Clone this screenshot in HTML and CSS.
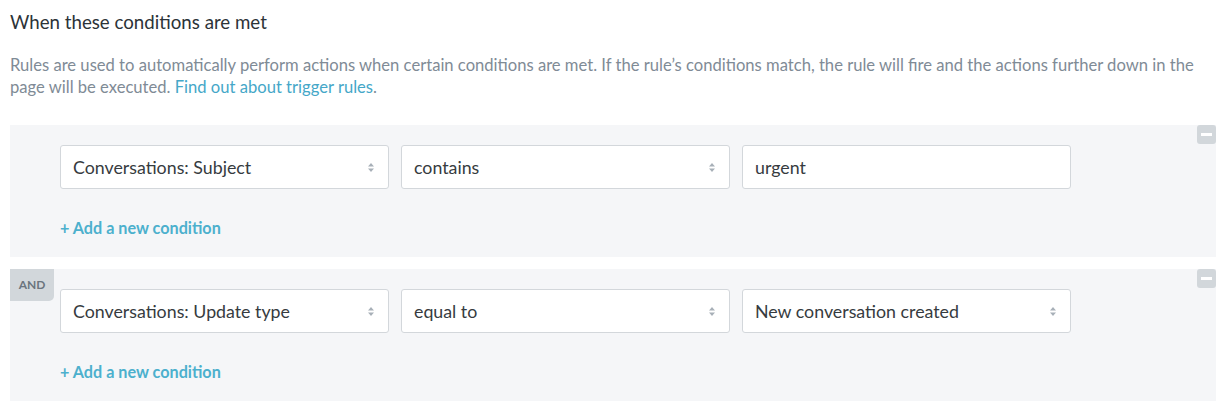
FILE: index.html
```html
<!DOCTYPE html>
<html>
<head>
<meta charset="utf-8">
<link rel="stylesheet" href="styles.css">
</head>
<body>
<div class="page">
  <h2 class="title">When these conditions are met</h2>
  <p class="desc"><span>Rules are used to automatically perform actions when certain conditions are met. If the rule’s conditions match, the rule will fire and the actions further down in the</span> <span>page will be executed.</span> <a class="link" href="#">Find out about trigger rules</a><span>.</span></p>

  <div class="group">
    <button class="remove" aria-label="Remove"><span class="bar"></span></button>
    <div class="row">
      <div class="select"><span>Conversations: Subject</span><svg class="caret" width="6" height="9" viewBox="0 0 6 9"><path d="M3 0L6 3.5H0Z M3 9L6 5.5H0Z" fill="#a8b0b8"/></svg></div>
      <div class="select"><span>contains</span><svg class="caret" width="6" height="9" viewBox="0 0 6 9"><path d="M3 0L6 3.5H0Z M3 9L6 5.5H0Z" fill="#a8b0b8"/></svg></div>
      <div class="input">urgent</div>
    </div>
    <a class="add" href="#">+ Add a new condition</a>
  </div>

  <div class="group">
    <span class="and">AND</span>
    <button class="remove" aria-label="Remove"><span class="bar"></span></button>
    <div class="row">
      <div class="select"><span>Conversations: Update type</span><svg class="caret" width="6" height="9" viewBox="0 0 6 9"><path d="M3 0L6 3.5H0Z M3 9L6 5.5H0Z" fill="#a8b0b8"/></svg></div>
      <div class="select"><span>equal to</span><svg class="caret" width="6" height="9" viewBox="0 0 6 9"><path d="M3 0L6 3.5H0Z M3 9L6 5.5H0Z" fill="#a8b0b8"/></svg></div>
      <div class="select"><span>New conversation created</span><svg class="caret" width="6" height="9" viewBox="0 0 6 9"><path d="M3 0L6 3.5H0Z M3 9L6 5.5H0Z" fill="#a8b0b8"/></svg></div>
    </div>
    <a class="add" href="#">+ Add a new condition</a>
  </div>
</div>
</body>
</html>
```
FILE: styles.css
```css
* { box-sizing: border-box; }
body {
  margin: 0;
  background: #fff;
  font-family: Lato, "Liberation Sans", sans-serif;
}
.page {
  padding: 10px 13px 0 10px;
}
.title {
  margin: 0;
  font-size: 18.7px;
  font-weight: 400;
  color: #2c3338;
  line-height: 24px;
}
.desc {
  margin: 20px 0 0 0;
  font-size: 16.6px;
  line-height: 22px;
  color: #7f8b96;
}
.link {
  color: #45a7c8;
  text-decoration: none;
}
.group {
  position: relative;
  background: #f5f6f8;
  margin-top: 27px;
  padding: 20px 50px 22px 50px;
  height: 132px;
}
.group + .group {
  margin-top: 12px;
}
.remove {
  position: absolute;
  top: 0;
  right: 0;
  width: 19px;
  height: 19px;
  border: 0;
  padding: 0;
  background: #d2d7db;
  border-radius: 3px;
  display: flex;
  align-items: center;
  justify-content: center;
}
.bar {
  width: 11px;
  height: 3px;
  background: #fff;
}
.and {
  position: absolute;
  top: 0;
  left: 0;
  width: 44px;
  height: 32px;
  background: #d2d7db;
  border-bottom-right-radius: 5px;
  color: #6b757e;
  font-size: 12px;
  font-weight: 700;
  display: flex;
  align-items: center;
  justify-content: center;
  padding-bottom: 2px;
}
.row {
  display: flex;
  gap: 12.5px;
}
.select, .input {
  width: 328.5px;
  height: 44px;
  background: #fff;
  border: 1px solid #d3d7db;
  border-radius: 3px;
  padding: 0 14px 0 12px;
  display: flex;
  align-items: center;
  justify-content: space-between;
  font-size: 17.8px;
  color: #363b40;
}
.caret { flex: none; }
.add {
  display: inline-block;
  margin-top: 28px;
  font-size: 16.2px;
  font-weight: 700;
  color: #4cb0cd;
  text-decoration: none;
  line-height: 22px;
}
```
